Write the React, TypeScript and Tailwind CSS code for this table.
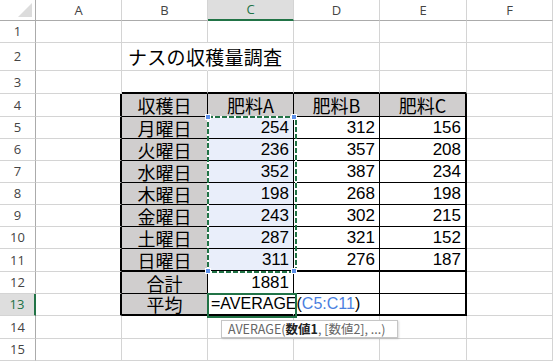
import type { ReactNode } from "react";

type Side = "g" | "k" | "kk" | "w" | "hd" | "gr";

const RIGHT: Record<Side, string> = {
  g: "border-r border-r-[#d4d4d4]",
  k: "border-r border-r-black",
  kk: "border-r-2 border-r-black",
  w: "border-r border-r-white",
  hd: "border-r border-r-[#ababab]",
  gr: "border-r-2 border-r-[#217346]",
};

const BOTTOM: Record<Side, string> = {
  g: "border-b border-b-[#d4d4d4]",
  k: "border-b border-b-black",
  kk: "border-b-2 border-b-black",
  w: "border-b border-b-white",
  hd: "border-b border-b-[#ababab]",
  gr: "border-b-2 border-b-[#217346]",
};

const cols = ["A", "B", "C", "D", "E", "F"];
const days = ["月曜日", "火曜日", "水曜日", "木曜日", "金曜日", "土曜日", "日曜日"];
const fa = [254, 236, 352, 198, 243, 287, 311];
const fb = [312, 357, 387, 268, 302, 321, 276];
const fc = [156, 208, 234, 198, 215, 152, 187];

function rightOf(row: number, col: number): Side {
  if (row === 0) return col === 0 ? "hd" : "g";
  if (col === 0) return row === 13 ? "gr" : "hd";
  if (row === 2 && col === 2) return "w";
  if (row >= 4 && row <= 13) {
    if (col === 1 || col === 5) return "kk";
    if (row === 13 && col === 3) return "w";
    if (col >= 2 && col <= 4) return "k";
  }
  return "g";
}

function bottomOf(row: number, col: number): Side {
  if (row === 0) return col === 3 ? "gr" : "hd";
  if (col === 0) return "g";
  if (col >= 2 && col <= 5) {
    if (row === 3 || row === 11 || row === 13) return "kk";
    if (row >= 4 && row <= 12) return "k";
  }
  return "g";
}

function Cell({ row, col, className = "", children }: { row: number; col: number; className?: string; children?: ReactNode }) {
  return (
    <div className={`${RIGHT[rightOf(row, col)]} ${BOTTOM[bottomOf(row, col)]} flex min-w-0 items-center ${className}`}>
      {children}
    </div>
  );
}

const gray = "bg-[#d0cece] justify-center text-[18px] text-black";
const num = "justify-end pr-[4px] font-['Liberation_Sans',sans-serif] text-[17px] text-black";

function content(row: number, col: number): { cls: string; node?: ReactNode } {
  if (row === 0 && col === 0)
    return {
      cls: "items-end justify-end pb-[3px] pr-[3px]",
      node: (
        <svg width="14" height="14" viewBox="0 0 14 14">
          <polygon points="14,0 14,14 0,14" fill="#dcdcdc" />
        </svg>
      ),
    };
  if (row === 0)
    return {
      cls: `justify-center font-['Open_Sans',sans-serif] text-[13px] ${col === 3 ? "bg-[#dedede] text-[#217346]" : "text-[#444]"}`,
      node: cols[col - 1],
    };
  if (col === 0)
    return {
      cls: `justify-center font-['Open_Sans',sans-serif] text-[13px] ${row === 13 ? "bg-[#dedede] text-[#217346]" : "text-[#444]"}`,
      node: row,
    };
  if (row === 2 && col === 2)
    return {
      cls: "overflow-visible whitespace-nowrap pl-[6px] text-[19px] tracking-[0.3px] text-black",
      node: "ナスの収穫量調査",
    };
  if (row === 4 && col >= 2 && col <= 5)
    return { cls: gray, node: ["収穫日", "肥料A", "肥料B", "肥料C"][col - 2] };
  if (row >= 5 && row <= 11) {
    const i = row - 5;
    if (col === 2) return { cls: gray, node: days[i] };
    if (col === 3) return { cls: `${num} bg-[#e9eefa]`, node: fa[i] };
    if (col === 4) return { cls: num, node: fb[i] };
    if (col === 5) return { cls: num, node: fc[i] };
  }
  if (row === 12 && col === 2) return { cls: gray, node: "合計" };
  if (row === 12 && col === 3) return { cls: num, node: 1881 };
  if (row === 13 && col === 2) return { cls: gray, node: "平均" };
  if (row === 13 && col === 3)
    return {
      cls: "overflow-visible whitespace-nowrap pl-[3px] font-['Liberation_Sans',sans-serif] text-[16px] text-black",
      node: (
        <span>
          =AVERAGE(<span className="text-[#4a7fe0]">C5:C11</span>)
        </span>
      ),
    };
  return { cls: "" };
}

function Handle({ className }: { className: string }) {
  return <div className={`absolute h-[6px] w-[6px] border border-white bg-[#5c8fea] ${className}`} />;
}

export default function App() {
  const rows = Array.from({ length: 16 }, (_, r) => r);
  return (
    <div className="relative h-[362px] w-[553px] overflow-hidden bg-white font-['Noto_Sans_CJK_JP',sans-serif] leading-none">
      <div className="grid grid-cols-[36px_86px_86px_86px_86px_87px_86px] grid-rows-[21px_22px_28px_23px_23px_22px_22px_22px_22px_22px_22px_23px_22px_22px_23px_22px]">
        {rows.map((r) =>
          [0, 1, 2, 3, 4, 5, 6].map((c) => {
            const { cls, node } = content(r, c);
            return (
              <Cell key={`${r}-${c}`} row={r} col={c} className={cls}>
                {node}
              </Cell>
            );
          }),
        )}
      </div>

      {/* copy range C5:C11 */}
      <svg className="absolute left-[207px] top-[116px]" width="90" height="157">
        <rect x="1" y="1" width="88" height="155" fill="none" stroke="white" strokeWidth="2" />
        <rect x="1" y="1" width="88" height="155" fill="none" stroke="#217346" strokeWidth="2" strokeDasharray="5 2" />
      </svg>
      <Handle className="left-[205px] top-[114px]" />
      <Handle className="left-[291px] top-[114px]" />
      <Handle className="left-[205px] top-[268px]" />
      <Handle className="left-[291px] top-[268px]" />

      {/* active cell */}
      <div className="absolute left-[207px] top-[293px] h-[25px] w-[90px] border-2 border-[#217346]" />

      {/* function hint */}
      <div className="absolute left-[221px] top-[320px] flex h-[18px] w-[177px] items-center whitespace-nowrap border border-[#c6c6c6] bg-white pl-[6px] text-[12.5px] text-[#666] shadow-[1px_1px_2px_rgba(0,0,0,0.15)]">
        AVERAGE(<span className="font-semibold text-[#222]">数値1</span>, [数値2], ...)
      </div>
    </div>
  );
}
